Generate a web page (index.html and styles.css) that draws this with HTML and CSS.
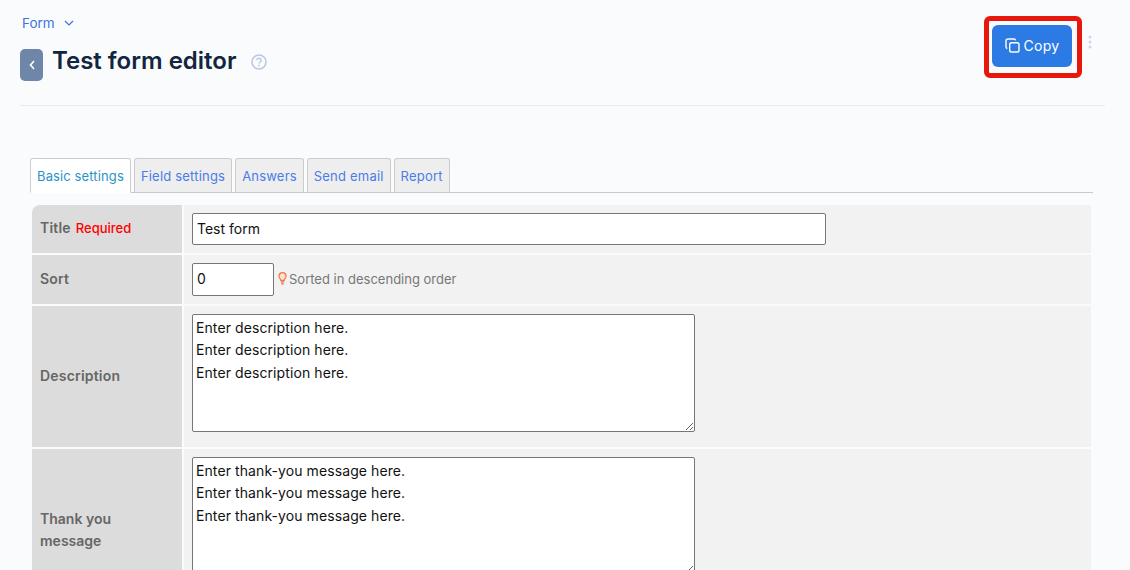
FILE: index.html
```html
<!DOCTYPE html>
<html lang="en">
<head>
<meta charset="utf-8">
<title>Test form editor</title>
<link rel="stylesheet" href="styles.css">
</head>
<body>
<header class="page-head">
  <div class="head-left">
    <a class="crumb">Form
      <svg class="crumb-caret" width="10" height="6" viewBox="0 0 10 6"><path d="M1 1l4 4 4-4" fill="none" stroke="#3f72e0" stroke-width="1.2"/></svg>
    </a>
    <div class="title-row">
      <a class="back">
        <svg width="6" height="10" viewBox="0 0 6 10"><path d="M5 1L1.500 5 5 9" fill="none" stroke="#fff" stroke-width="1.600"/></svg>
      </a>
      <h1 class="title">Test form editor</h1>
      <svg class="help" width="16" height="16" viewBox="0 0 16 16"><circle cx="8" cy="8" r="7" fill="none" stroke="#b9c7df" stroke-width="1.500"/><path d="M5.900 6.200a2.100 2.100 0 1 1 3.200 1.800c-.7.4-1.100.8-1.100 1.600" fill="none" stroke="#b9c7df" stroke-width="1.400"/><circle cx="8" cy="11.700" r=".9" fill="#b9c7df"/></svg>
    </div>
  </div>
  <div class="head-right">
    <div class="highlight">
      <button class="copy">
        <svg width="15" height="15" viewBox="0 0 15 15"><rect x="4.700" y="4.700" width="9.300" height="9.300" rx="1.800" fill="none" stroke="#fff" stroke-width="1.400"/><path d="M10.500 2.300A1.700 1.700 0 0 0 9 1H3A2 2 0 0 0 1 3v6A1.700 1.700 0 0 0 2.300 10.500" fill="none" stroke="#fff" stroke-width="1.400"/></svg>
        Copy
      </button>
    </div>
    <svg class="more" width="4" height="14" viewBox="0 0 4 14"><circle cx="2" cy="2" r="1.500" fill="#ccd8e8"/><circle cx="2" cy="7" r="1.500" fill="#ccd8e8"/><circle cx="2" cy="12" r="1.500" fill="#ccd8e8"/></svg>
  </div>
</header>
<main class="content">
  <nav class="tabs">
    <a class="tab active">Basic settings</a>
    <a class="tab">Field settings</a>
    <a class="tab">Answers</a>
    <a class="tab">Send email</a>
    <a class="tab">Report</a>
  </nav>
  <div class="rows">
    <div class="row first">
      <div class="label">Title <span class="req">Required</span></div>
      <div class="field"><input class="input-wide" type="text" value="Test form"></div>
    </div>
    <div class="row">
      <div class="label">Sort</div>
      <div class="field">
        <input class="input-num" type="text" value="0">
        <svg class="bulb" width="9" height="13" viewBox="0 0 9 13"><path d="M2.800 8.300C2.700 6.900 1 6.100 1 4.200a3.500 3.500 0 0 1 7 0C8 6.100 6.300 6.900 6.200 8.300z" fill="#fde3d6" stroke="#f5774a" stroke-width="1.200"/><path d="M2.800 9.800h3.400" stroke="#f5774a" stroke-width="1.400"/><path d="M3.300 11.700h2.400" stroke="#f5774a" stroke-width="1.600"/></svg>
        <span class="hint">Sorted in descending order</span>
      </div>
    </div>
    <div class="row">
      <div class="label">Description</div>
      <div class="field"><textarea class="area">Enter description here.
Enter description here.
Enter description here.</textarea></div>
    </div>
    <div class="row tall">
      <div class="label">Thank you message</div>
      <div class="field"><textarea class="area">Enter thank-you message here.
Enter thank-you message here.
Enter thank-you message here.</textarea></div>
    </div>
  </div>
</main>
</body>
</html>
```
FILE: styles.css
```css
* { box-sizing: border-box; }
html, body { margin: 0; height: 570px; overflow: hidden; }
body {
  background: #fafbfd;
  font-family: Inter, "Noto Sans", sans-serif;
  font-size: 14px;
  color: #666;
}
.page-head {
  margin: 0 25px 0 20px;
  height: 106px;
  border-bottom: 1px solid #e6ebf3;
  display: flex;
  justify-content: space-between;
}
.head-left { padding-top: 13px; }
.crumb { display: flex; align-items: center; gap: 9px; margin-left: 2px; height: 19px; color: #3f72e0; font-size: 13.500px; }
.title-row { display: flex; align-items: flex-start; margin-top: 17px; }
.back {
  width: 23px; height: 32px; border-radius: 5px; background: #6e86a8;
  display: flex; align-items: center; justify-content: center;
}
.title { margin: -6px 15px 0 9px; font-size: 24px; line-height: 36px; font-weight: 600; color: #12263f; }
.help { margin-top: 5px; }
.head-right { display: flex; align-items: flex-start; padding-top: 16px; }
.highlight { width: 98px; height: 62px; border: 5px solid #e8170b; border-radius: 6px; padding: 4px 3px 0; }
.copy {
  width: 80px; height: 42px; border: 0; border-radius: 6px; padding: 0 0 2px; background: #2c7be5; color: #fff;
  font: 400 14px Inter, sans-serif; letter-spacing: .3px;
  display: flex; align-items: center; justify-content: center; gap: 4px;
}
.more { margin: 19px 13px 0 6px; }
.content { height: 464px; overflow: hidden; padding: 52px 37px 0 30px; }
.tabs { display: flex; gap: 3px; height: 35px; border-bottom: 1px solid #c9c9c9; }
.tab {
  height: 35px; padding: 9px 6px 0; border: 1px solid #ccc; border-bottom: 1px solid #c9c9c9; border-radius: 3px 3px 0 0;
  background: #eee; color: #4a7ce8; font-size: 13px; line-height: 16px; letter-spacing: .2px;
}
.tab.active { background: #fff; color: #2a94c8; border-bottom-color: #fff; letter-spacing: .12px; }
.rows { margin: 12px 2px 0; display: flex; flex-direction: column; gap: 2px; }
.row { display: grid; grid-template-columns: 150px 1fr; gap: 2px; }
.row.tall { height: 162px; overflow: hidden; }
.row.tall .label { padding-bottom: 0; letter-spacing: 0; }
.row.first .label { border-top-left-radius: 8px; }
.label {
  background: #dcdcdc; padding: 0 8px 2px 8px; font-weight: 600; color: #666; font-size: 14px; line-height: 22px; letter-spacing: .2px;
  display: flex; flex-wrap: wrap; align-items: center; align-content: center; column-gap: 5px;
}
.req { color: #f00; font-size: 13px; font-weight: 500; letter-spacing: 0; }
.field { background: #f2f2f2; padding: 8px; display: flex; align-items: center; overflow: hidden; }
input, textarea {
  border: 1px solid #767676; border-radius: 2px; background: #fff; color: #111;
  font-family: Inter, sans-serif; font-size: 14px; display: block;
}
.input-wide { width: 634px; height: 32px; padding: 0 4px 2px; }
.input-num { width: 82px; height: 33px; padding: 0 4px 2px; }
.bulb { margin: 0 2px 2px 4px; flex: none; }
.hint { font-size: 13px; color: #777; padding-bottom: 2px; }
.area { width: 503px; height: 118px; padding: 2px 3px; line-height: 22.400px; letter-spacing: .09px; resize: vertical; margin-bottom: 7px; align-self: flex-start; flex: none; }
```
